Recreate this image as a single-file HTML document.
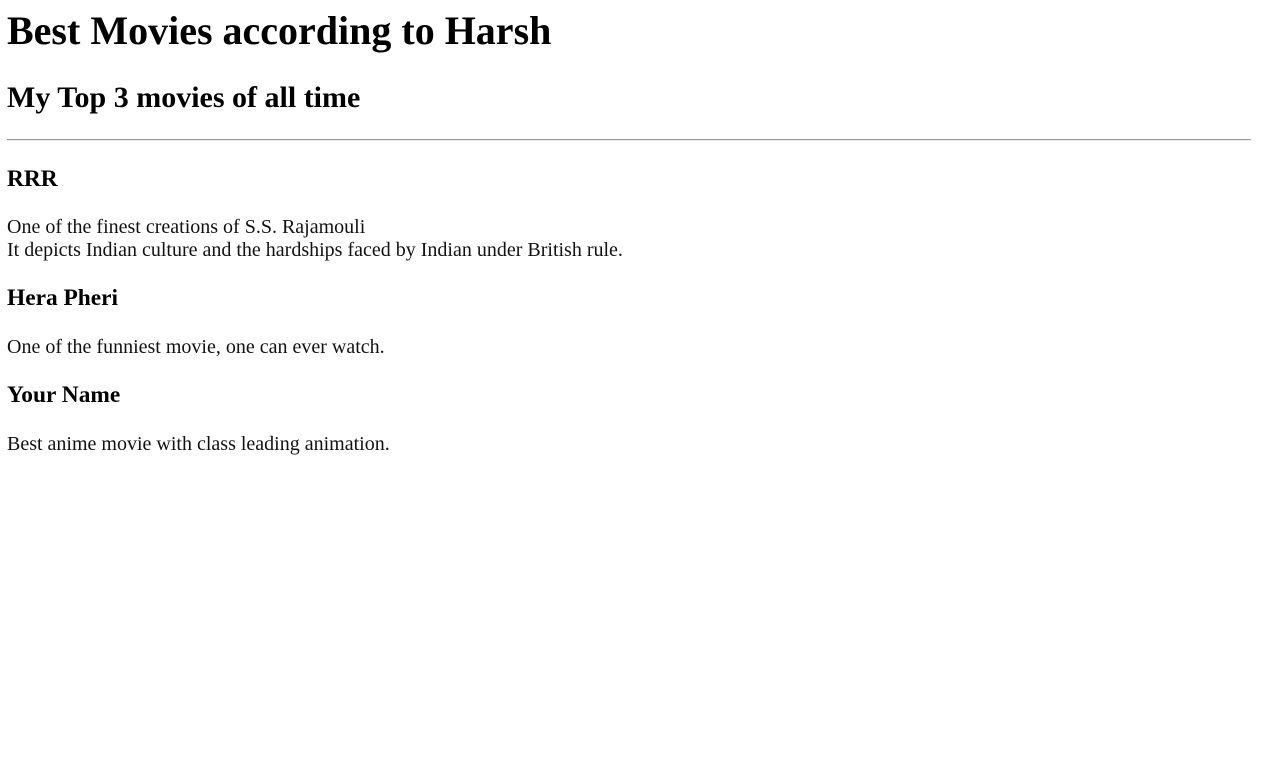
<!DOCTYPE html>
<html><head><style>
html,body{margin:0;padding:0;background:#fff;}
body{font-family:"Liberation Serif",serif;color:#000;width:1262px;height:779px;position:relative;overflow:hidden;}
.a{position:absolute;left:7px;margin:0;white-space:nowrap;line-height:normal;}
h1.a{font-size:40px;top:7px;}
h2.a{font-size:30px;top:81px;}
h3.a{font-size:23.4px;}
p.a{font-size:20px;color:#111;}
hr{position:absolute;left:7px;width:1244px;top:139px;margin:0;border:0;border-top:1px solid #9a9a9a;border-bottom:1px solid #eee;height:0;}
</style></head><body>
<h1 class="a">Best Movies according to Harsh</h1>
<h2 class="a">My Top 3 movies of all time</h2>
<hr>
<h3 class="a" style="top:166px">RRR</h3>
<p class="a" style="top:216px">One of the finest creations of S.S. Rajamouli<br>It depicts Indian culture and the hardships faced by Indian under British rule.</p>
<h3 class="a" style="top:285px">Hera Pheri</h3>
<p class="a" style="top:336px">One of the funniest movie, one can ever watch.</p>
<h3 class="a" style="top:382px">Your Name</h3>
<p class="a" style="top:433px">Best anime movie with class leading animation.</p>
</body></html>
